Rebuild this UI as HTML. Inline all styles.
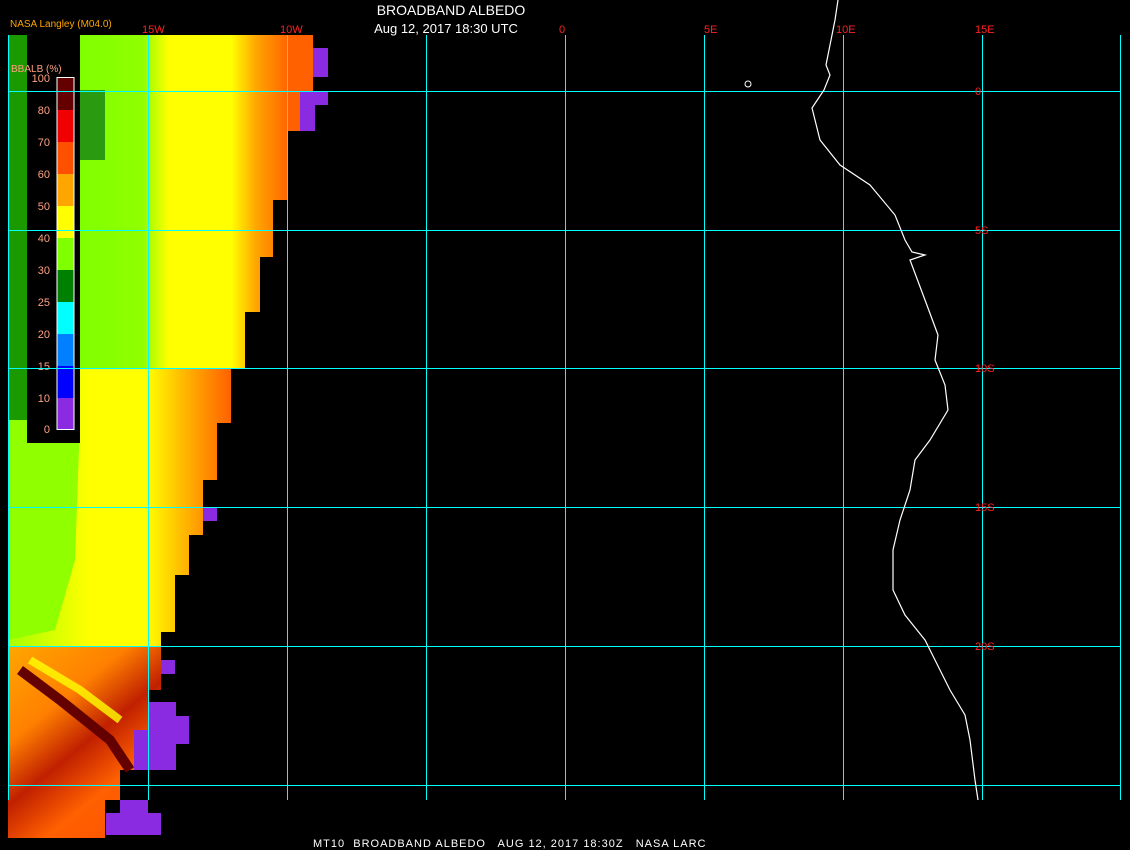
<!DOCTYPE html>
<html><head><meta charset="utf-8"><style>
html,body{margin:0;padding:0;background:#000;width:1130px;height:850px;overflow:hidden}
svg{display:block}
text{font-family:"Liberation Sans",sans-serif}
</style></head><body>
<svg width="1130" height="850" viewBox="0 0 1130 850" xmlns="http://www.w3.org/2000/svg">
<defs>
<linearGradient id="g1" x1="80" x2="290" y1="0" y2="0" gradientUnits="userSpaceOnUse">
<stop offset="0" stop-color="#80ff00"/><stop offset="0.3" stop-color="#90ff00"/><stop offset="0.42" stop-color="#ffff00"/><stop offset="0.72" stop-color="#ffff00"/><stop offset="0.84" stop-color="#ffa500"/><stop offset="1" stop-color="#ff6000"/>
</linearGradient>
<linearGradient id="g2" x1="8" x2="240" y1="0" y2="0" gradientUnits="userSpaceOnUse">
<stop offset="0" stop-color="#a8ff00"/><stop offset="0.35" stop-color="#ffff00"/><stop offset="0.6" stop-color="#ffff00"/><stop offset="0.8" stop-color="#ffa500"/><stop offset="1" stop-color="#ff5000"/>
</linearGradient>
<linearGradient id="g3" x1="8" y1="650" x2="160" y2="838" gradientUnits="userSpaceOnUse">
<stop offset="0" stop-color="#ffa500"/><stop offset="0.3" stop-color="#ff8000"/><stop offset="0.5" stop-color="#c02000"/><stop offset="0.7" stop-color="#ff6000"/><stop offset="1" stop-color="#ff5000"/>
</linearGradient>
</defs>
<polygon fill="url(#g1)" points="80,35 313,35 313,131 287,131 287,200 273,200 273,257 260,257 260,312 245,312 245,368 80,368"/>
<polygon fill="url(#g2)" points="8,368 231,368 231,423 217,423 217,480 203,480 203,535 189,535 189,575 175,575 175,632 161,632 161,646 8,646"/>
<polygon fill="#90ff00" points="8,420 80,420 75,560 55,630 8,640"/>
<polygon fill="url(#g3)" points="8,646 161,646 161,690 148,690 148,770 120,770 120,800 105,800 105,838 8,838"/>
<path d="M20,670 L60,700 L110,740 L130,770" stroke="#640000" stroke-width="10" fill="none"/>
<path d="M30,660 L80,690 L120,720" stroke="#ffff00" stroke-width="8" fill="none" opacity="0.8"/>
<rect x="8" y="35" width="72" height="60" fill="#80ff00"/>
<rect x="8" y="35" width="19" height="385" fill="#1b9a00"/>
<rect x="80" y="90" width="25" height="70" fill="#2a9a10"/>
<g fill="#8a2be2">
<rect x="313" y="48" width="15" height="29"/><rect x="300" y="91" width="28" height="14"/><rect x="300" y="105" width="15" height="26"/>
<rect x="203" y="507" width="14" height="14"/><rect x="161" y="660" width="14" height="14"/>
<rect x="148" y="702" width="28" height="14"/><rect x="148" y="716" width="41" height="28"/><rect x="134" y="730" width="42" height="40"/>
<rect x="120" y="800" width="28" height="15"/><rect x="106" y="813" width="55" height="22"/>
</g>
<rect x="27" y="35" width="53" height="408" fill="#000"/>
<rect x="57" y="78" width="17" height="32" fill="#640000"/>
<rect x="57" y="110" width="17" height="32" fill="#f00000"/>
<rect x="57" y="142" width="17" height="32" fill="#ff5000"/>
<rect x="57" y="174" width="17" height="32" fill="#ffa500"/>
<rect x="57" y="206" width="17" height="32" fill="#ffff00"/>
<rect x="57" y="238" width="17" height="32" fill="#80ff00"/>
<rect x="57" y="270" width="17" height="32" fill="#008000"/>
<rect x="57" y="302" width="17" height="32" fill="#00ffff"/>
<rect x="57" y="334" width="17" height="32" fill="#0080ff"/>
<rect x="57" y="366" width="17" height="32" fill="#0000ff"/>
<rect x="57" y="398" width="17" height="32" fill="#8a2be2"/>
<rect x="57" y="77.5" width="17" height="352" fill="none" stroke="#fff" stroke-width="1"/>
<g fill="#ffa080" font-size="11" text-anchor="end">
<text x="50" y="82">100</text><text x="50" y="114">80</text><text x="50" y="146">70</text><text x="50" y="178">60</text><text x="50" y="210">50</text><text x="50" y="242">40</text><text x="50" y="274">30</text><text x="50" y="306">25</text><text x="50" y="338">20</text><text x="50" y="370">15</text><text x="50" y="402">10</text><text x="50" y="433">0</text>
</g>
<text x="11" y="72" fill="#ffa080" font-size="10">BBALB (%)</text>
<text x="10" y="27" fill="#ffa500" font-size="10">NASA Langley (M04.0)</text>
<g stroke="#00ffff" stroke-width="1">
<line x1="8.5" y1="35" x2="8.5" y2="800"/><line x1="148.5" y1="35" x2="148.5" y2="800"/><line x1="287.5" y1="35" x2="287.5" y2="800"/><line x1="426.5" y1="35" x2="426.5" y2="800"/><line x1="565.5" y1="35" x2="565.5" y2="800"/><line x1="704.5" y1="35" x2="704.5" y2="800"/><line x1="843.5" y1="35" x2="843.5" y2="800"/><line x1="982.5" y1="35" x2="982.5" y2="800"/><line x1="1120.5" y1="35" x2="1120.5" y2="800"/>
<line x1="8" y1="91.5" x2="1120" y2="91.5"/><line x1="8" y1="230.5" x2="1120" y2="230.5"/><line x1="8" y1="368.5" x2="1120" y2="368.5"/><line x1="8" y1="507.5" x2="1120" y2="507.5"/><line x1="8" y1="646.5" x2="1120" y2="646.5"/><line x1="8" y1="785.5" x2="1120" y2="785.5"/>
</g>
<polyline fill="none" stroke="#fff" stroke-width="1.2" points="838,0 835,20 830,45 826,65 830,75 824,90 812,108 820,140 840,165 870,185 895,215 905,240 912,252 925,255 910,260 925,300 938,335 935,360 945,385 948,410 930,440 915,460 910,490 900,520 893,550 893,590 905,615 925,640 935,660 950,690 965,715 970,740 975,780 978,800"/>
<ellipse cx="748" cy="84" rx="3" ry="3" fill="none" stroke="#fff"/>
<g fill="#ff2020" font-size="11" font-family="Liberation Mono,monospace">
<text x="142" y="33">15W</text><text x="280" y="33">10W</text><text x="559" y="33">0</text><text x="704" y="33">5E</text><text x="836" y="33">10E</text><text x="975" y="33">15E</text>
<text x="975" y="95">0</text><text x="975" y="234">5S</text><text x="975" y="372">10S</text><text x="975" y="511">15S</text><text x="975" y="650">20S</text>
</g>
<text x="451" y="15" fill="#fff" font-size="14" text-anchor="middle">BROADBAND ALBEDO</text>
<text x="446" y="33" fill="#fff" font-size="13" text-anchor="middle">Aug 12, 2017 18:30 UTC</text>
<text x="313" y="847" fill="#fff" font-size="11" font-family="Liberation Mono,monospace" xml:space="preserve" letter-spacing="1">MT10  BROADBAND ALBEDO   AUG 12, 2017 18:30Z   NASA LARC</text>
</svg>
</body></html>
